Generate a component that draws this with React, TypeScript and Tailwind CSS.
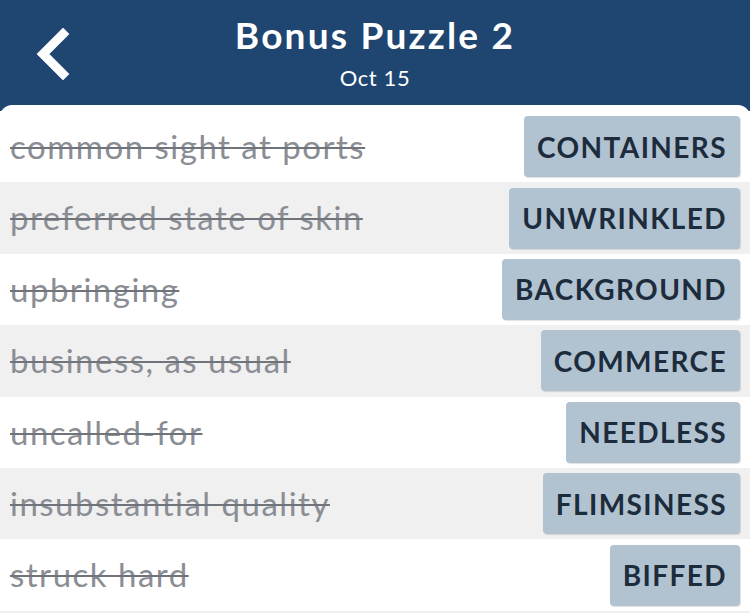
import React from "react";

const rows = [
  { clue: "common sight at ports", answer: "CONTAINERS" },
  { clue: "preferred state of skin", answer: "UNWRINKLED" },
  { clue: "upbringing", answer: "BACKGROUND" },
  { clue: "business, as usual", answer: "COMMERCE" },
  { clue: "uncalled-for", answer: "NEEDLESS" },
  { clue: "insubstantial quality", answer: "FLIMSINESS" },
  { clue: "struck hard", answer: "BIFFED" },
  { clue: "", answer: "" },
];

export default function App() {
  return (
    <div
      className="w-[750px] h-[613px] overflow-hidden bg-[#1f4571]"
      style={{ fontFamily: "Lato, 'Noto Sans', sans-serif" }}
    >
      <header className="relative h-[105px] flex flex-col items-center text-white">
        <svg
          className="absolute left-[34px] top-[28px]"
          width="36"
          height="52"
          viewBox="0 0 36 52"
        >
          <path
            d="M29 6 L9 26 L29 46"
            fill="none"
            stroke="white"
            strokeWidth="9"
            strokeLinecap="square"
            strokeLinejoin="miter"
          />
        </svg>
        <h1 className="mt-[10px] text-[37px] leading-[50px] font-bold tracking-[2.2px]">
          Bonus Puzzle 2
        </h1>
        <p className="mt-[2px] text-[22px] leading-[32px] tracking-[0.6px]">Oct 15</p>
      </header>

      <main className="bg-white rounded-t-[12px] pt-[6px]">
        {rows.map((r, i) => (
          <div
            key={i}
            className={`h-[71.4px] flex items-center justify-between pl-[10px] pr-[10px] ${
              i % 2 === 1 ? "bg-[#f0f0f0]" : "bg-white"
            }`}
          >
            <span className="text-[33px] tracking-[1.5px] text-[#8a8e94] line-through decoration-[#6f747a] decoration-[2px]">
              {r.clue}
            </span>
            {r.answer && (
              <span className="h-[61px] flex items-center px-[13px] rounded-[4px] bg-[#b1c2d0] shadow-[1px_1px_1px_rgba(0,0,0,0.12)] text-[28px] font-bold text-[#1c2c3c] tracking-[1.4px]">
                {r.answer}
              </span>
            )}
          </div>
        ))}
      </main>
    </div>
  );
}
